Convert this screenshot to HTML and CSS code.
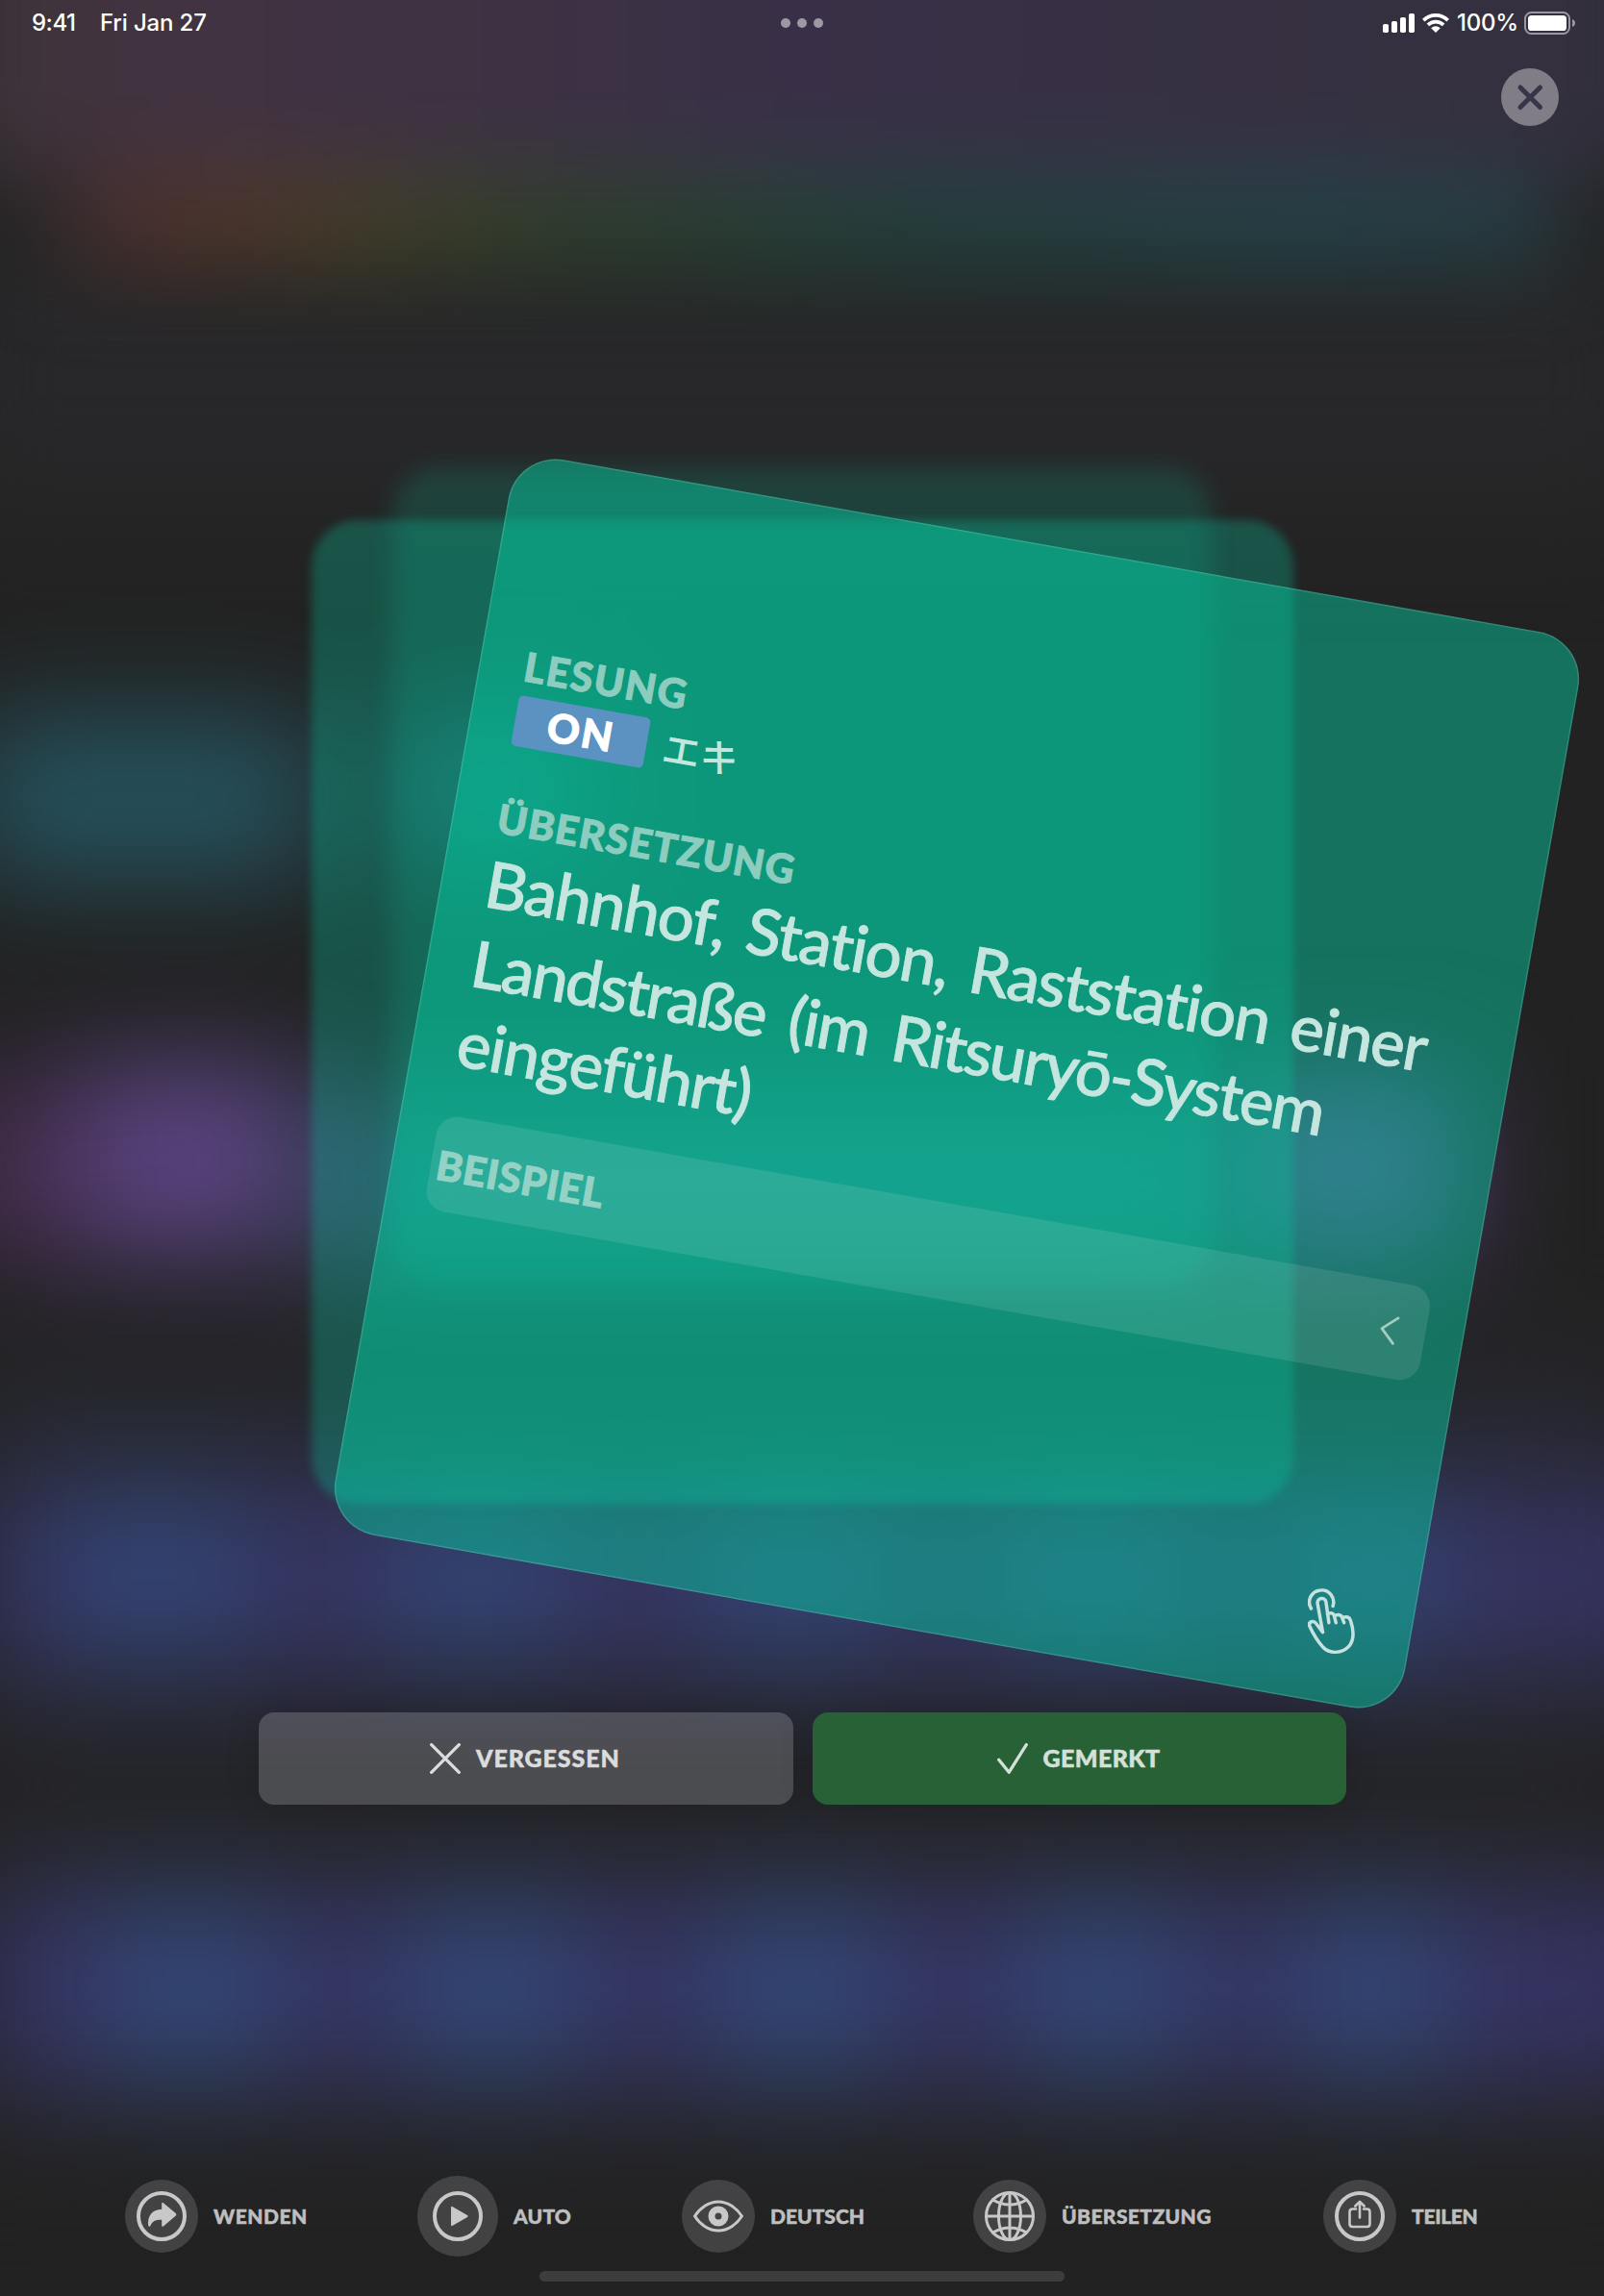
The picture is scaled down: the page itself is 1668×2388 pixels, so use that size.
FILE: index.html
```html
<!DOCTYPE html>
<html lang="de">
<head>
<meta charset="utf-8">
<title>Karteikarten</title>
<link rel="stylesheet" href="styles.css">
</head>
<body>
<svg class="backdrop" viewBox="0 0 1668 2388" aria-hidden="true">
  <defs>
    <filter id="soft" x="-400" y="-400" width="2468" height="3188" filterUnits="userSpaceOnUse" color-interpolation-filters="sRGB"><feGaussianBlur stdDeviation="44"/></filter>
    <filter id="softer" x="-400" y="-400" width="2468" height="3188" filterUnits="userSpaceOnUse" color-interpolation-filters="sRGB"><feGaussianBlur stdDeviation="58"/></filter>
    <linearGradient id="violet" x1="0" x2="1"><stop offset="0" stop-color="#3d3439"/><stop offset=".12" stop-color="#423340"/><stop offset=".5" stop-color="#393047"/><stop offset="1" stop-color="#33303d"/></linearGradient>
    <linearGradient id="rainbow" x1="0" x2="1"><stop offset="0" stop-color="#3e2d2f"/><stop offset=".08" stop-color="#50332c"/><stop offset=".16" stop-color="#4a3a29"/><stop offset=".2" stop-color="#443f29"/><stop offset=".32" stop-color="#30402b"/><stop offset=".55" stop-color="#23413c"/><stop offset=".85" stop-color="#244248"/><stop offset="1" stop-color="#273d42"/></linearGradient>
  </defs>
  <rect width="1668" height="2388" fill="#222222"/>
  <g filter="url(#softer)">
    <rect x="-60" y="250" width="1788" height="280" fill="#28282a"/>
    <rect x="-30" y="745" width="360" height="170" fill="#25525d"/>
    <rect x="410" y="740" width="200" height="160" fill="#24505b"/>
    <rect x="80" y="1105" width="230" height="200" fill="#59437f"/>
    <rect x="-60" y="1120" width="140" height="190" fill="#432c4b"/>
    <rect x="330" y="1130" width="940" height="200" fill="#374560"/>
    <rect x="1290" y="1120" width="230" height="190" fill="#573f7c"/>
    <rect x="-30" y="1420" width="1728" height="400" fill="#272830"/>
    <rect x="-30" y="1545" width="1798" height="190" fill="#353360"/>
    <rect x="60" y="1545" width="200" height="180" fill="#334373"/>
    <rect x="400" y="1550" width="190" height="180" fill="#334373"/>
    <rect x="730" y="1550" width="190" height="180" fill="#334373"/>
    <rect x="1040" y="1550" width="190" height="180" fill="#334373"/>
    <rect x="1350" y="1550" width="150" height="180" fill="#334373"/>
    <rect x="-30" y="1900" width="1728" height="320" fill="#27282e"/>
    <rect x="-30" y="1970" width="1798" height="195" fill="#353362"/>
    <rect x="105" y="1970" width="180" height="195" fill="#334675"/>
    <rect x="420" y="1970" width="180" height="195" fill="#334675"/>
    <rect x="740" y="1970" width="180" height="195" fill="#334675"/>
    <rect x="1060" y="1970" width="170" height="195" fill="#334675"/>
    <rect x="1350" y="1970" width="150" height="195" fill="#334675"/>
  </g>
  <g filter="url(#soft)">
    <rect x="-50" y="-160" width="1780" height="345" fill="url(#violet)"/>
    <rect x="60" y="180" width="1560" height="100" fill="url(#rainbow)"/>
  </g>
</svg>

<header class="status">
  <span class="time">9:41</span><span class="date">Fri Jan 27</span>
  <div class="dots"><i></i><i></i><i></i></div>
  <div class="indicators">
    <svg class="signal" viewBox="0 0 33 20"><g fill="#fff"><rect y="11" width="6" height="9" rx="1.8"/><rect x="9" y="8" width="6" height="12" rx="1.8"/><rect x="18" y="4" width="6" height="16" rx="1.8"/><rect x="27" width="6" height="20" rx="1.8"/></g></svg>
    <svg class="wifi" viewBox="0 0 28 20"><g fill="none" stroke="#fff" stroke-width="3.6"><path d="M1.3 7.1a18 18 0 0 1 25.4 0"/><path d="M5.9 11.9a11.6 11.6 0 0 1 16.2 0"/></g><path d="M9.2 15.3a6.8 6.8 0 0 1 9.6 0L14 20z" fill="#fff"/></svg>
    <span class="percent">100%</span>
    <svg class="battery" viewBox="0 0 53 24"><rect x="1" y="1" width="46" height="22" rx="6.5" fill="none" stroke="#fff" stroke-opacity=".5" stroke-width="2"/><rect x="4" y="4" width="40" height="16" rx="3.6" fill="#fff"/><path d="M50 8q3 1.200 3 4t-3 4z" fill="#fff" fill-opacity=".5"/></svg>
  </div>
</header>

<div class="top-actions">
  <button class="close" aria-label="Schließen"><svg viewBox="0 0 60 60"><path d="M20 20 40.500 40.500M40.500 20 20 40.500" stroke="#37354a" stroke-width="5" stroke-linecap="round"/></svg></button>
</div>

<main class="stage">
  <div class="sheet sheet-far"></div>
  <div class="sheet sheet-near"></div>
  <article class="card">
    <h2 class="label l-reading">LESUNG</h2>
    <div class="reading"><span class="badge">ON</span><span class="kana">エキ</span></div>
    <h2 class="label l-translation">ÜBERSETZUNG</h2>
    <p class="meaning"><span class="m1">Bahnhof, Station, Raststation einer</span><br><span class="m2">Landstraße (im Ritsuryō-System</span><br><span class="m3">eingeführt)</span></p>
    <div class="example"><h2 class="label l-example">BEISPIEL</h2><svg class="chevron" viewBox="0 0 20 32"><path d="M17.500 2.500 2.500 16 16.500 29.500" fill="none" stroke="#a6cbbf" stroke-width="2.800" stroke-linecap="round" stroke-linejoin="round"/></svg></div>
    <svg class="tap" viewBox="0 0 50 68"><g fill="none" stroke="#c6e2de" stroke-width="3.500" stroke-linecap="round" stroke-linejoin="round"><path d="M3.600 20.800A12.600 12.600 0 1 1 26.300 18.200"/><path d="M15.700 45.500 10.300 15.500C9.500 9.500 18.200 8.300 19.100 14L22.100 35.500M20.600 26.500Q26.500 24 27.600 28.400L29.400 35.500M28.200 28.200Q34.600 25.800 35.800 30.200L37.800 35.500M36.200 30.300Q43 28 44.500 33C48 43 49 52 43.500 59.500C36 68 23 68.500 15.500 60.500C9 53 5 45.500 2 39C.5 34.500 6 32.500 9 36.500L15.700 45.500"/></g></svg>
  </article>
</main>

<div class="answers">
  <button class="answer forgot"><svg viewBox="0 0 32 32"><path d="M1.700 1.700 30.300 30.300M30.300 1.700 1.700 30.300"/></svg><span>VERGESSEN</span></button>
  <button class="answer knew"><svg viewBox="0 0 32 32"><path d="M1.700 17.300 12.200 30.300 30.300 1.700"/></svg><span>GEMERKT</span></button>
</div>

<nav class="toolbar">
  <a class="tool t-flip"><span class="disc"><svg viewBox="0 0 52 52"><circle cx="26" cy="26" r="24"/><path class="fill" d="M26.200 13.200q0-2.500 2-.8L40.800 23q1.200 1.200 0 2.400L28.200 36.200q-2 1.500-2-.8v-5.600c-6-.2-10 1.400-11.600 5.900q-.8 1.700-2.300.6C11 26 15.500 19.300 26.200 18.700z"/></svg></span><span>WENDEN</span></a>
  <a class="tool t-auto"><span class="disc large"><svg viewBox="0 0 52 52"><circle cx="26" cy="26" r="24"/><path class="fill" d="M19 17.200q0-2 1.800-1L36 25q1.400 1 0 2L20.800 35.800q-1.800 1-1.800-1z"/></svg></span><span>AUTO</span></a>
  <a class="tool t-lang"><span class="disc"><svg viewBox="0 0 52 52"><path class="line" d="M1.500 26C7 17.500 16 11 26 11s19 6.500 24.500 15C45 34.500 36 41 26 41S7 34.500 1.500 26z"/><path class="fill" fill-rule="evenodd" d="M26 15.500a10.500 10.500 0 1 0 0 21 10.500 10.500 0 1 0 0-21zm0 7a3.500 3.500 0 1 1 0 7 3.500 3.500 0 1 1 0-7z"/></svg></span><span>DEUTSCH</span></a>
  <a class="tool t-trans"><span class="disc"><svg viewBox="0 0 52 52"><g class="line"><circle class="line" cx="26" cy="26" r="24.500"/><path d="M26 1.500v49M1.500 26h49M8.500 9Q26 19 43.500 9M8.500 43Q26 33 43.500 43"/><ellipse cx="26" cy="26" rx="11.500" ry="24.500"/></g></svg></span><span>ÜBERSETZUNG</span></a>
  <a class="tool t-share"><span class="disc"><svg viewBox="0 0 52 52"><circle cx="26" cy="26" r="24"/><path class="thin" d="M22 18.500h-3.500q-3 0-3 3V34q0 3 3 3h15q3 0 3-3V21.500q0-3-3-3H30M26 27.500V11.500M21.300 15.500 26 10.800l4.700 4.700"/></svg></span><span>TEILEN</span></a>
</nav>
<div class="home-indicator"></div>
</body>
</html>
```
FILE: styles.css
```css
* { box-sizing: border-box; }

body {
  margin: 0;
  width: 1668px;
  height: 2388px;
  display: flex;
  flex-direction: column;
  position: relative;
  overflow: hidden;
  background: #222;
  font-family: Lato, "Noto Sans CJK JP", sans-serif;
}

button { border: 0; padding: 0; margin: 0; font: inherit; }
h2, p { margin: 0; }
svg { display: block; }

.backdrop {
  position: absolute;
  inset: 0;
  width: 1668px;
  height: 2388px;
  z-index: -1;
}

/* status bar */
.status {
  flex: none;
  height: 48px;
  padding: 0 32px 0 33px;
  display: flex;
  align-items: center;
  position: relative;
  color: #fff;
  font: 500 24px/48px Inter, sans-serif;
}
.time { width: 71px; letter-spacing: -.5px; }
.date { letter-spacing: -.15px; }
.dots {
  position: absolute;
  left: 812px;
  top: 19px;
  display: flex;
  gap: 7px;
}
.dots i { width: 10px; height: 10px; border-radius: 50%; background: #9c99a4; }
.indicators { margin-left: auto; display: flex; align-items: center; }
.signal { width: 33px; height: 20px; margin-right: 8px; }
.wifi { width: 28px; height: 20px; margin-right: 8px; }
.percent { width: 70px; letter-spacing: -.2px; }
.battery { width: 53px; height: 24px; margin-right: -2px; }

/* close */
.top-actions {
  flex: none;
  height: 83px;
  padding: 23px 47px 0;
  display: flex;
  justify-content: flex-end;
}
.close { width: 60px; height: 60px; border-radius: 50%; background: #807d87; }

/* card stack */
.stage { flex: none; height: 1650px; position: relative; }
.sheet { position: absolute; border-radius: 48px; }
.sheet-far {
  left: 408px;
  top: 356px;
  width: 852px;
  height: 852px;
  background: rgba(5, 209, 165, .17);
  filter: blur(12px);
}
.sheet-near {
  left: 324px;
  top: 410px;
  width: 1021px;
  height: 1023px;
  background: rgba(5, 209, 165, .28);
  filter: blur(5px);
}
.card {
  position: absolute;
  left: 430px;
  top: 428px;
  width: 1130px;
  height: 1136px;
  padding: 193px 40px 0 41px;
  display: flex;
  flex-direction: column;
  border-radius: 50px;
  background: rgba(5, 209, 165, .46);
  box-shadow: inset 0 0 0 1.500px rgba(255, 255, 255, .14);
  transform: rotate(10deg);
}
.label {
  font-size: 42px;
  font-weight: 900;
  line-height: 50px;
  padding-left: 6px;
  color: #8ccdbf;
  -webkit-text-stroke: 1px currentColor;
  white-space: nowrap;
}
.l-reading { letter-spacing: 1.500px; }
.l-translation { letter-spacing: 1px; }
.l-example { letter-spacing: .4px; color: #95d2c6; }
.reading { display: flex; margin: 6px 0 51px 6px; height: 53px; }
.badge {
  width: 139px;
  border-radius: 5px;
  background: #5b92c2;
  color: #fff;
  font-size: 42px;
  font-weight: 900;
  line-height: 52px;
  text-align: center;
  letter-spacing: 2px;
  -webkit-text-stroke: 1px currentColor;
}
.kana {
  margin-left: 17px;
  font: 500 40px/53px "Noto Sans CJK JP", sans-serif;
  color: #c3e7de;
}
.meaning {
  margin: 1px 0 36px;
  padding-left: 6px;
  font-size: 67px;
  font-weight: 500;
  line-height: 84px;
  color: #c5e6df;
  -webkit-text-stroke: .9px currentColor;
  white-space: nowrap;
}
.m1 { letter-spacing: -1.350px; word-spacing: 7px; }
.m2 { letter-spacing: -1.900px; word-spacing: 10px; }
.m3 { letter-spacing: -1.400px; }
.example {
  height: 100px;
  padding: 3px 28px 0 0;
  display: flex;
  align-items: center;
  justify-content: space-between;
  border-radius: 22px;
  background: rgba(255, 255, 255, .1);
}
.chevron { width: 20px; height: 32px; margin-top: -3px; }
.tap { width: 50px; height: 68px; margin: 225px 19px 0 auto; transform: rotate(-10deg); }

/* answer buttons */
.answers {
  flex: none;
  display: grid;
  grid-template-columns: 1fr 1fr;
  gap: 20px;
  padding: 0 268px 0 269px;
}
.answer {
  height: 96px;
  display: flex;
  align-items: center;
  border-radius: 16px;
  box-shadow: 0 0 36px rgba(0, 0, 0, .14);
  color: #dcdcdc;
  font-size: 25px;
  font-weight: 900;
  letter-spacing: .9px;
  white-space: nowrap;
}
.answer svg {
  width: 32px;
  height: 32px;
  margin-right: 16px;
  fill: none;
  stroke: currentColor;
  stroke-width: 3.300px;
  stroke-linecap: round;
  stroke-linejoin: round;
}
.answer span, .tool > span:last-child { -webkit-text-stroke: .5px currentColor; }
.answer span { margin-top: -2px; }
.forgot { background: rgba(255, 255, 255, .18); padding-left: 178px; }
.knew { background: #286136; color: #d5e1d8; padding-left: 192px; letter-spacing: .4px; }

/* toolbar */
.toolbar {
  flex: none;
  height: 84px;
  margin-top: 386px;
  padding-left: 130px;
  display: flex;
  align-items: center;
  gap: 115px;
  color: #bfbfbf;
  font-size: 21px;
  font-weight: 900;
}
.tool { display: flex; align-items: center; gap: 16px; white-space: nowrap; }
.tool > span:last-child { margin-top: -1px; }
.t-flip { width: 189px; letter-spacing: .5px; }
.t-auto { width: 160px; letter-spacing: .2px; }
.t-lang { width: 188px; }
.t-trans { width: 249px; letter-spacing: .4px; }
.t-share { letter-spacing: -.3px; }
.disc {
  flex: none;
  width: 76px;
  height: 76px;
  display: grid;
  place-items: center;
  border-radius: 50%;
  background: rgba(255, 255, 255, .15);
}
.disc.large { width: 84px; height: 84px; }
.disc svg { width: 52px; height: 52px; fill: none; stroke: #c8c8c8; stroke-width: 4px; stroke-linecap: round; stroke-linejoin: round; }
.disc .fill { fill: #c8c8c8; stroke: none; }
.disc .line { stroke-width: 3px; }
.disc .thin { stroke-width: 2.600px; }

.home-indicator {
  flex: none;
  width: 546px;
  height: 11px;
  margin: 15px auto 0;
  border-radius: 6px;
  background: #3d3d3d;
}
```
